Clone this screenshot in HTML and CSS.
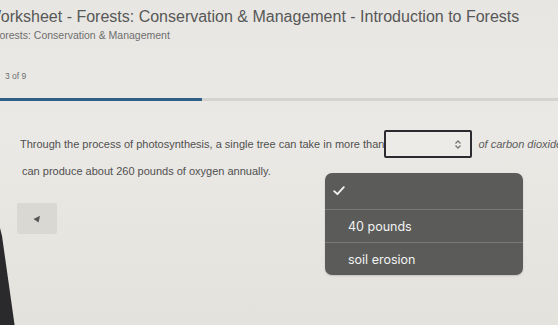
FILE: index.html
```
<!DOCTYPE html>
<html>
<head>
<meta charset="utf-8">
<link rel="stylesheet" href="styles.css">
</head>
<body>
<div class="page">
  <header class="header">
    <h1 class="title">Worksheet - Forests: Conservation &amp; Management - Introduction to Forests</h1>
    <div class="subtitle">Forests: Conservation &amp; Management</div>
    <div class="counter">3 of 9</div>
  </header>
  <div class="progress"><div class="progress-fill"></div></div>
  <main class="question">
    <div class="line line1">
      <span class="before">Through the process of photosynthesis, a single tree can take in more than</span>
      <span class="select">
        <svg class="select-icon" width="8" height="9" viewBox="0 0 8 9"><path d="M1.5 3.5 L4 1 L6.5 3.5 M1.5 5.5 L4 8 L6.5 5.5" fill="none" stroke="#777" stroke-width="1.3"/></svg>
      </span>
      <span class="after">of carbon dioxide</span>
    </div>
    <div class="line line2">can produce about 260 pounds of oxygen annually.</div>
    <div class="controls">
      <button class="back"><svg width="8" height="8" viewBox="0 0 8 8"><path d="M0.5 4 L7 0.8 L5.6 7.5 Z" fill="#555"/></svg></button>
    </div>
  </main>
  <div class="menu">
    <div class="menu-item check"><svg width="12" height="10" viewBox="0 0 12 10"><path d="M1.2 5.2 L4.4 8.2 L10.8 1.2" fill="none" stroke="#f4f4f4" stroke-width="1.8" stroke-linecap="round" stroke-linejoin="round"/></svg></div>
    <div class="menu-item">40 pounds</div>
    <div class="menu-item">soil erosion</div>
  </div>
  <svg class="bezel" width="20" height="100" viewBox="0 0 20 100"><polygon points="0,0 2,8 15,100 0,100" fill="#2a2a2c"/></svg>
</div>
</body>
</html>
```
FILE: styles.css
```
* { box-sizing: border-box; }
html, body { margin: 0; padding: 0; }
body {
  width: 558px;
  height: 325px;
  overflow: hidden;
  font-family: "Liberation Sans", Arial, sans-serif;
  color: #4e4e4e;
  background: linear-gradient(180deg, #e7e6e2 0%, #ebe9e5 40%, #e3e2dd 100%);
}
.page {
  position: relative;
  width: 558px;
  height: 325px;
  overflow: hidden;
}
.header {
  padding-top: 8px;
}
.title {
  margin: 0 0 0 -14px;
  font-size: 16px;
  line-height: 18px;
  font-weight: normal;
  color: #575757;
  white-space: nowrap;
}
.subtitle {
  margin: 3px 0 0 -7px;
  font-size: 10.5px;
  line-height: 12px;
  color: #6e6e6e;
  white-space: nowrap;
}
.counter {
  margin: 30px 0 0 5px;
  font-size: 8.5px;
  line-height: 10px;
  color: #6e6e6e;
}
.progress {
  margin-top: 17px;
  height: 3px;
  background: #d3d3cf;
}
.progress-fill {
  width: 202px;
  height: 3px;
  background: #2f5f86;
}
.question {
  padding-left: 20px;
  padding-top: 29px;
}
.line {
  font-size: 11px;
  color: #505050;
  white-space: nowrap;
}
.line1 {
  display: flex;
  align-items: center;
  height: 28px;
}
.line1 > span { flex-shrink: 0; }
.select {
  display: flex;
  align-items: center;
  justify-content: flex-end;
  width: 88px;
  height: 28px;
  margin-left: 0;
  padding-right: 8px;
  border: 2px solid #2b2b30;
  border-radius: 2px;
  background: #ecebe8;
}
.after {
  margin-left: 6px;
  color: #5c5c5c;
  font-style: italic;
}
.line2 {
  margin-top: 7px;
  padding-left: 2px;
  line-height: 13px;
}
.controls {
  margin-top: 25px;
  margin-left: -3px;
}
.back {
  display: flex;
  align-items: center;
  justify-content: center;
  width: 40px;
  height: 31px;
  padding: 0;
  border: none;
  border-radius: 2px;
  background: #d9d8d3;
}
.menu {
  position: absolute;
  left: 325px;
  top: 173px;
  width: 198px;
  height: 102px;
  background: #5b5c5a;
  border-radius: 7px;
  display: flex;
  flex-direction: column;
  box-shadow: 0 1px 2px rgba(0,0,0,0.15);
}
.menu-item {
  flex: 1;
  display: flex;
  align-items: center;
  padding-left: 23px;
  font-family: "Inter", "Open Sans", sans-serif;
  font-size: 12.5px;
  color: #f2f2f2;
  border-top: 1px solid #787976;
}
.menu-item:first-child {
  border-top: none;
  flex: 0 0 36px;
  padding-left: 8px;
}
.bezel {
  position: absolute;
  left: 0;
  top: 228px;
}
```
